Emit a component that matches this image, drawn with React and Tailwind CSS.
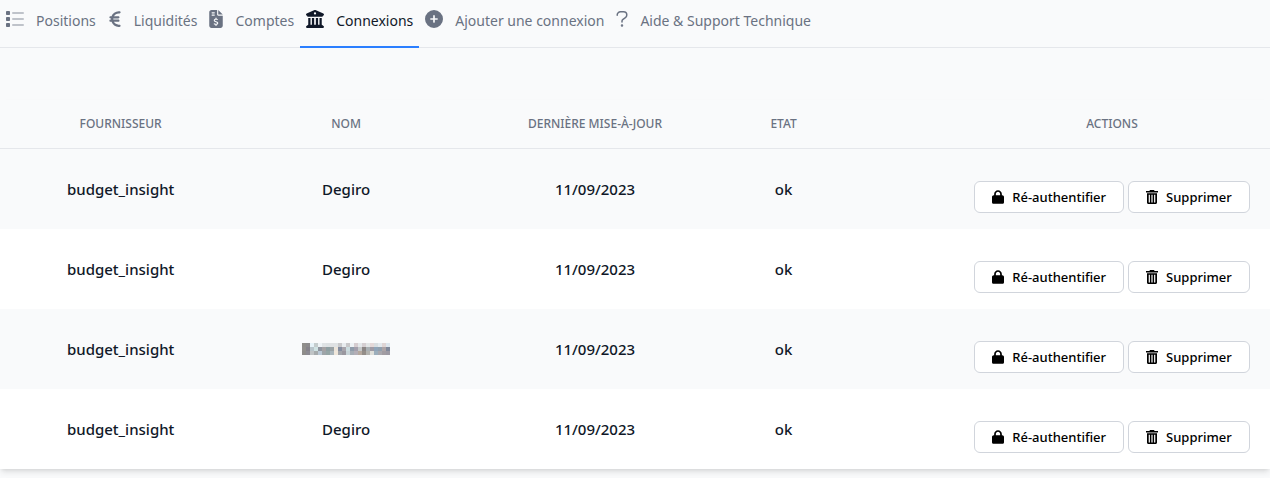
import { FaEuroSign, FaFileInvoiceDollar, FaBuildingColumns, FaCirclePlus, FaLock } from "react-icons/fa6";

function ListIcon({ className }) {
  return (
    <svg viewBox="0 0 18 16" className={className} aria-hidden="true">
      <g fill="currentColor">
        <rect x="0" y="0" width="4" height="4" rx="0.8" />
        <rect x="0" y="6" width="4" height="4" rx="0.8" />
        <rect x="0" y="12" width="4" height="4" rx="0.8" />
      </g>
      <g fill="currentColor" opacity="0.4">
        <rect x="6" y="1" width="12" height="2" rx="1" />
        <rect x="6" y="7" width="12" height="2" rx="1" />
        <rect x="6" y="13" width="12" height="2" rx="1" />
      </g>
    </svg>
  );
}

function QuestionIcon({ className }) {
  return (
    <svg
      viewBox="0 0 12 18"
      className={className}
      fill="none"
      stroke="currentColor"
      strokeWidth="1.5"
      strokeLinecap="round"
      aria-hidden="true"
    >
      <path d="M1.2 5.2V5C1.200 3.100 2.700 1.800 4.500 1.800h3C9.400 1.800 10.800 3.200 10.800 5c0 1.300-.7 2.300-1.700 2.900L7 9.300C6.300 9.800 6 10.300 6 11.100V12" />
      <circle cx="6" cy="15.500" r="0.500" fill="currentColor" />
    </svg>
  );
}

function TrashIcon({ className }) {
  return (
    <svg viewBox="0 0 12 14" className={className} fill="currentColor" aria-hidden="true">
      <path d="M4 0h4l.6 1H12v1.600H0V1h3.400z" />
      <path fillRule="evenodd" d="M1 3.300h10V12.500c0 .9-.6 1.500-1.500 1.500h-7C1.600 14 1 13.400 1 12.500zM2.700 4.800v7.600h1.200v-7.600zM5.400 4.800v7.600h1.200v-7.600zM8.100 4.800v7.600h1.200v-7.600z" />
    </svg>
  );
}

const TABS = [
  { label: "Positions", Icon: ListIcon, size: "w-[18px] h-4" },
  { label: "Liquidités", Icon: FaEuroSign, size: "w-[14px] h-[18px]" },
  { label: "Comptes", Icon: FaFileInvoiceDollar, size: "w-[14px] h-[18px]" },
  { label: "Connexions", Icon: FaBuildingColumns, size: "w-[18px] h-[18px]", active: true },
  { label: "Ajouter une connexion", Icon: FaCirclePlus, size: "w-[18px] h-[18px]" },
  { label: "Aide & Support Technique", Icon: QuestionIcon, size: "w-3 h-[18px]" },
];

const COLUMNS = [
  { label: "Fournisseur", width: "w-[19%]" },
  { label: "Nom", width: "w-[16.500%]" },
  { label: "Dernière mise-à-jour", width: "w-[22.700%]" },
  { label: "Etat", width: "w-[7%]" },
  { label: "Actions", width: "pl-[126px]" },
];

const ROWS = [
  { id: 1, provider: "budget_insight", name: "Degiro", date: "11/09/2023", state: "ok" },
  { id: 2, provider: "budget_insight", name: "Degiro", date: "11/09/2023", state: "ok" },
  { id: 3, provider: "budget_insight", name: null, date: "11/09/2023", state: "ok" },
  { id: 4, provider: "budget_insight", name: "Degiro", date: "11/09/2023", state: "ok" },
];

// Nom masqué : mosaïque de 22 × 3 cases
const MOSAIC = [
  "8f8d8a 8c8a8c e6f2f8 c4cccd eef3f6 dfe3e5 dde1e3 dfe1e3 dfe2e4 c9c9cb e8ecef c8c8ca eef2f5 d6cdd0 e4e8eb d5cfd2 e2e5e6 e4d8d8 d8dde0 e3e9ee dfd5d5 dde6ee",
  "918f8c 85828a b8c4ca cfe2e3 8f959f a5a2a4 8e9fa2 9aa2a5 ece4da 848da0 a8a4ab cbdcdf 8f9caa a39fac c5c9ca 8b8685 a9b0b4 9f9ba5 8fa4b8 91a0ae ada4a6 7f889a",
  "8e8c8a 8c8a92 c0c4c6 a6abad bbc9d6 9ea4a8 95a5a5 a9b5bb f0e7db a2a5ab 9a979f c7d3d7 a5adb5 b3aeb6 b5a89e 938d88 b2b2ae dfdfda 9caebc a9a8ae a19ca2 9c99a3",
].map((line) => line.split(" "));

function MaskedName() {
  return (
    <svg viewBox="0 0 88 12" className="mx-auto w-[88px] h-3" shapeRendering="crispEdges" role="img" aria-label="Nom masqué">
      {MOSAIC.map((line, y) =>
        line.map((c, x) => <rect key={`${x}-${y}`} x={x * 4} y={y * 4} width="4" height="4" fill={`#${c}`} />)
      )}
    </svg>
  );
}

function ActionButton({ Icon, size, children }) {
  return (
    <button
      type="button"
      className="inline-flex items-center gap-2 h-8 px-[17px] rounded-md border border-gray-300 bg-white text-[13px] leading-5 font-medium text-black whitespace-nowrap hover:bg-gray-50"
    >
      <Icon className={size} />
      {children}
    </button>
  );
}

export default function App() {
  return (
    <div className="min-h-screen bg-gray-50 font-['Noto_Sans',sans-serif]">
      <nav className="flex h-12 border-b border-gray-200">
        {TABS.map(({ label, Icon, size, active }) => (
          <a
            key={label}
            href="#"
            aria-current={active ? "page" : undefined}
            className={`flex items-center gap-3 h-12 px-1.5 pb-2 border-b-2 text-sm whitespace-nowrap ${
              active ? "border-blue-500 text-gray-900" : "border-transparent text-gray-500"
            }`}
          >
            <Icon className={size} />
            <span className="pt-1">{label}</span>
          </a>
        ))}
      </nav>

      <main className="pt-[52px]">
        <table className="w-full table-fixed border-separate border-spacing-0 bg-white text-center shadow-md">
          <thead className="bg-gray-50">
            <tr>
              {COLUMNS.map((c) => (
                <th
                  key={c.label}
                  scope="col"
                  className={`${c.width} h-[49px] border-b border-gray-200 text-xs font-medium uppercase text-gray-500`}
                >
                  {c.label}
                </th>
              ))}
            </tr>
          </thead>
          <tbody className="text-[15px] font-medium text-gray-900">
            {ROWS.map((r) => (
              <tr key={r.id} className="h-20 odd:bg-gray-50 even:bg-white">
                <td>{r.provider}</td>
                <td>{r.name ?? <MaskedName />}</td>
                <td>{r.date}</td>
                <td>{r.state}</td>
                <td className="pl-[126px]">
                  <div className="flex justify-center gap-1 pt-4">
                    <ActionButton Icon={FaLock} size="w-3 h-[14px]">Ré-authentifier</ActionButton>
                    <ActionButton Icon={TrashIcon} size="w-3 h-[14px]">Supprimer</ActionButton>
                  </div>
                </td>
              </tr>
            ))}
          </tbody>
        </table>
      </main>
    </div>
  );
}
